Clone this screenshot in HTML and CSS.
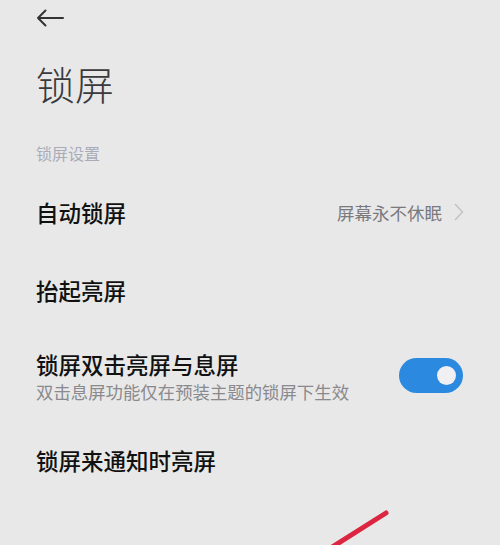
FILE: index.html
```html
<!DOCTYPE html>
<html lang="zh-CN">
<head>
<meta charset="utf-8">
<title>锁屏</title>
<link rel="stylesheet" href="styles.css">
</head>
<body>
<div class="page">
  <header class="topbar">
    <svg class="back" width="28" height="18" viewBox="0 0 28 18" aria-hidden="true">
      <path d="M27 9H2M9.5 1.5L2 9l7.5 7.5" fill="none" stroke="#333" stroke-width="2" stroke-linecap="round" stroke-linejoin="round"/>
    </svg>
  </header>
  <h1 class="title">锁屏</h1>
  <div class="section-label">锁屏设置</div>
  <div class="list">
    <div class="row">
      <div class="row-text"><div class="row-title">自动锁屏</div></div>
      <div class="row-value">屏幕永不休眠
        <svg class="chev" width="10" height="18" viewBox="0 0 10 18" aria-hidden="true"><path d="M1.5 1.5L8.5 9l-7 7.5" fill="none" stroke="#c4c4c8" stroke-width="1.6" stroke-linecap="round" stroke-linejoin="round"/></svg>
      </div>
    </div>
    <div class="row">
      <div class="row-text"><div class="row-title">抬起亮屏</div></div>
    </div>
    <div class="row row-tall">
      <div class="row-text row-text-two">
        <div class="row-title">锁屏双击亮屏与息屏</div>
        <div class="row-sub">双击息屏功能仅在预装主题的锁屏下生效</div>
      </div>
      <div class="toggle on"><span class="knob"></span></div>
    </div>
    <div class="row">
      <div class="row-text"><div class="row-title">锁屏来通知时亮屏</div></div>
    </div>
  </div>
</div>
<svg class="mark" width="500" height="545" viewBox="0 0 500 545" aria-hidden="true">
  <path d="M386 513L318 556" stroke="#dc2540" stroke-width="5" stroke-linecap="round" fill="none"/>
</svg>
</body>
</html>
```
FILE: styles.css
```css
html, body {
  margin: 0;
  padding: 0;
}
body {
  background: #e8e8e8;
  width: 500px;
  height: 545px;
  overflow: hidden;
  position: relative;
  font-family: "Noto Sans CJK SC", "Noto Sans", sans-serif;
}
.page {
  padding-left: 36px;
  padding-right: 36px;
}
.topbar {
  height: 36px;
  display: flex;
  align-items: center;
}
.back {
  display: block;
}
.title {
  margin: 23px 0 0 0;
  font-size: 39px;
  line-height: 48px;
  font-weight: 300;
  color: #3a3a3c;
}
.section-label {
  margin-top: 34px;
  font-size: 16px;
  line-height: 24px;
  color: #a9acb8;
}
.list {
  margin-top: 8px;
}
.row {
  height: 78px;
  display: flex;
  align-items: center;
  justify-content: space-between;
}
.row-tall {
  height: 92px;
}
.row-text-two {
  padding-top: 4px;
}
.row-title {
  font-size: 22.5px;
  line-height: 28px;
  font-weight: 500;
  color: #111;
}
.row-sub {
  font-size: 17.4px;
  line-height: 27px;
  color: #8a8a8e;
}
.row-value {
  display: flex;
  align-items: center;
  gap: 12px;
  font-size: 17.5px;
  color: #7a7a7e;
}
.chev {
  display: block;
}
.toggle {
  width: 64px;
  height: 35px;
  border-radius: 18px;
  background: #2b8ae0;
  position: relative;
  margin-right: 1px;
}
.knob {
  position: absolute;
  right: 7px;
  top: 8px;
  width: 19px;
  height: 19px;
  border-radius: 50%;
  background: #f0f0f2;
}
.mark {
  position: absolute;
  left: 0;
  top: 0;
  pointer-events: none;
}
```
